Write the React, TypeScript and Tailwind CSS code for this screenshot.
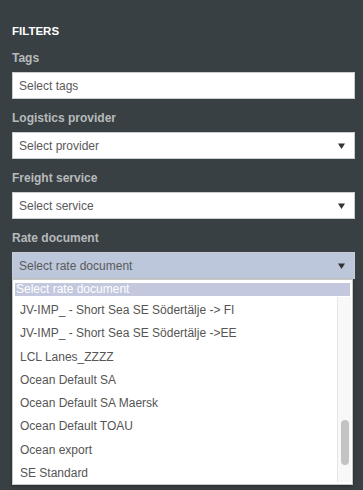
import React from 'react'

const ITEMS = [
  'JV-IMP_ - Short Sea SE Södertälje -> FI',
  'JV-IMP_ - Short Sea SE Södertälje ->EE',
  'LCL Lanes_ZZZZ',
  'Ocean Default SA',
  'Ocean Default SA Maersk',
  'Ocean Default TOAU',
  'Ocean export',
  'SE Standard',
]

function Caret() {
  return (
    <svg width="7" height="6" viewBox="0 0 7 6" className="shrink-0">
      <path d="M0 0.5 H7 L3.5 6 Z" fill="#333" />
    </svg>
  )
}

function Label({ children }: { children: React.ReactNode }) {
  return <div className="h-4 text-[12px] leading-4 font-bold text-[#b6babc]">{children}</div>
}

function Field({ placeholder, select, active }: { placeholder: string; select?: boolean; active?: boolean }) {
  return (
    <div
      className={`mt-[6px] mb-[11px] h-[27px] flex items-center justify-between pl-[6px] pr-[9px] border border-[#c9cdd0] text-[12px] text-[#5a5a5a] ${active ? 'bg-[#bdc7db]' : 'bg-white'}`}
    >
      <span>{placeholder}</span>
      {select && <Caret />}
    </div>
  )
}

export default function App() {
  return (
    <div className="w-[363px] h-[490px] overflow-hidden bg-[#394043] pl-3 pr-2 pt-6 font-['Liberation_Sans',Arial,sans-serif]">
      <div className="h-[14px] text-[11.5px] leading-[14px] font-bold text-white">FILTERS</div>
      <div className="mt-3">
        <Label>Tags</Label>
        <Field placeholder="Select tags" />
        <Label>Logistics provider</Label>
        <Field placeholder="Select provider" select />
        <Label>Freight service</Label>
        <Field placeholder="Select service" select />
        <Label>Rate document</Label>
        <div className="relative">
          <Field placeholder="Select rate document" select active />
          <div className="absolute left-0 top-[27px] w-[341px] h-[206px] bg-white border border-[#c8c8c8] shadow-[0_1px_3px_rgba(0,0,0,0.35)] flex flex-col">
            <div className="mx-[2px] mt-[3px] h-[13px] bg-[#c3c8de] text-white text-[12px] leading-[13px] pl-[1px]">
              Select rate document
            </div>
            <div className="flex flex-1 mt-[1px] overflow-hidden">
              <div className="flex-1 pt-[2px]">
                {ITEMS.map(item => (
                  <div key={item} className="h-[23.3px] leading-[23.3px] pl-[7px] text-[12px] text-[#555] whitespace-nowrap">
                    {item}
                  </div>
                ))}
              </div>
              <div className="w-[14px] mr-[1px] mb-[2px] bg-[#f8f8f8] border-l border-[#e6e6e6] flex flex-col items-center">
                <div className="mt-[123px] w-[8px] h-[45px] rounded-full bg-[#c3c3c3]" />
              </div>
            </div>
          </div>
        </div>
      </div>
    </div>
  )
}
